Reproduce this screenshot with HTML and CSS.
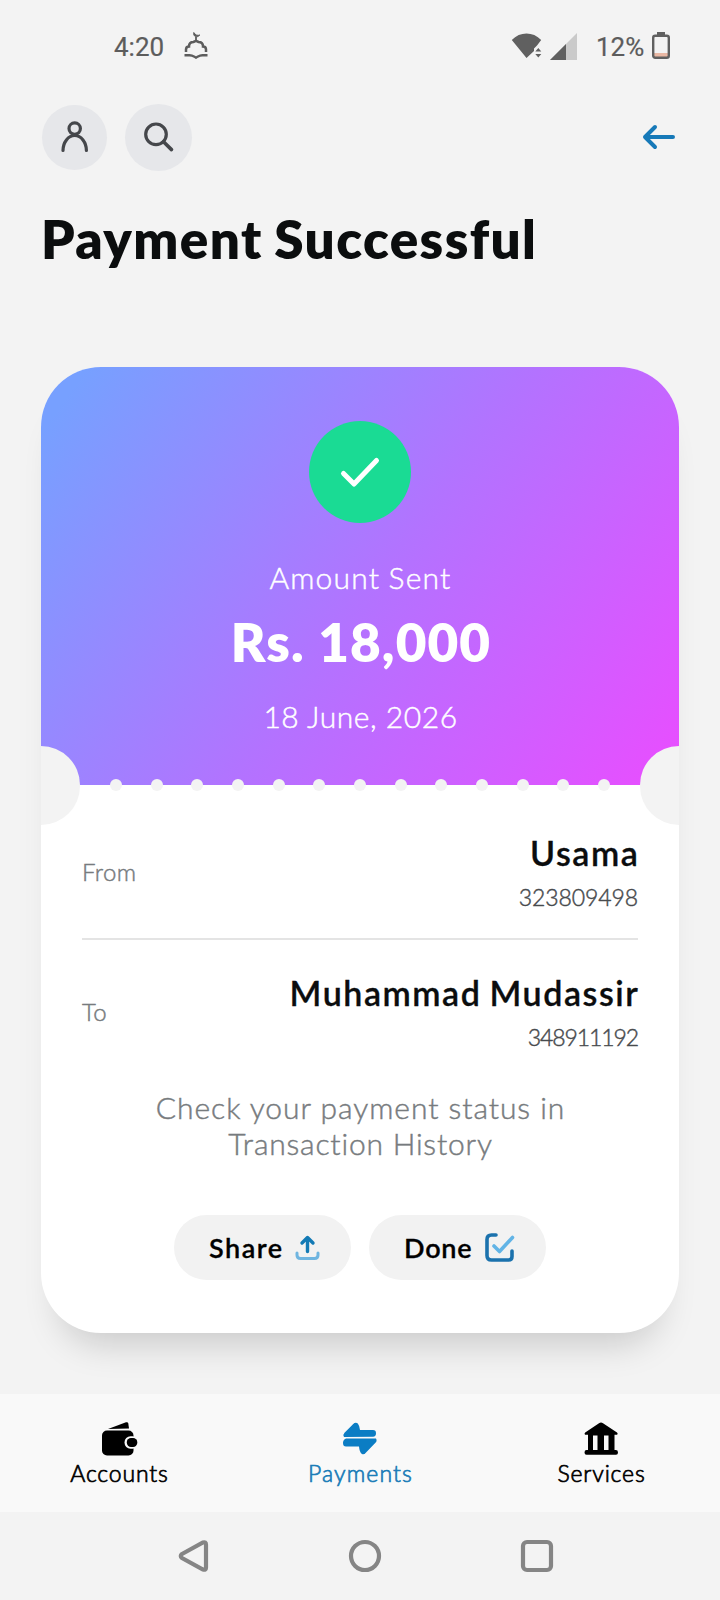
FILE: index.html
```html
<!DOCTYPE html>
<html lang="en">
<head>
<meta charset="utf-8">
<title>Payment Successful</title>
<link rel="stylesheet" href="styles.css">
</head>
<body>
<div class="screen">
  <header class="status">
    <span class="clock">4:20</span>
    <svg class="mosque" width="24" height="28" viewBox="0 0 24 28" fill="none" stroke="#5c5c5c" stroke-width="2.500"><path d="M2 20v-2.500c0-2 1-3 3-3 0-3 2-4.500 4.500-4.500L12 8.800l2.500 1.200c2.500 0 4.500 1.500 4.500 4.500 2 0 3 1 3 3V20M.5 23.300h5c3 0 4 1 6.500 2.200 2.500-1.200 3.500-2.200 6.500-2.200h5"/><path d="M12 5v4" stroke-width="1.800"/><path d="M9.800.5c-.8 4 3 6 6 2.500-2 .8-4.500.3-6-2.500z" fill="#5c5c5c" stroke-width="1"/></svg>
    <svg class="wifi" width="32" height="28" viewBox="0 0 32 28" fill="#606060"><path d="M.8 8C9-.6 22-.6 30.200 8L26 13.500l-3 3v2.500L15.500 26z"/><path d="M24.300 19.500h6L27.300 16zM24.300 22h6l-3 3.500z"/></svg>
    <svg class="signal" width="28" height="28" viewBox="0 0 28 28"><path d="M0 28L27 1v27z" fill="#cacaca"/><path d="M0 28l16-16v16z" fill="#606060"/></svg>
    <span class="percent">12%</span>
    <svg class="battery" width="18" height="28" viewBox="0 0 18 28"><path d="M5 0h8v4H5z" fill="#606060"/><path d="M2 21h14v4H2z" fill="#eab8a4"/><rect x="1.200" y="3.700" width="15.600" height="22" rx="2" fill="none" stroke="#606060" stroke-width="2.400"/></svg>
  </header>

  <div class="toolbar">
    <button class="round profile" aria-label="Profile"><svg width="30" height="34" viewBox="0 0 30 34" fill="none" stroke="#45474b" stroke-width="3.200" stroke-linecap="round"><circle cx="14.700" cy="8.600" r="5.700"/><path d="M3 30.500a11.700 15 0 0 1 23.400 0"/></svg></button>
    <button class="round search" aria-label="Search"><svg width="32" height="32" viewBox="0 0 32 32" fill="none" stroke="#45474b" stroke-width="3.200" stroke-linecap="round"><circle cx="13" cy="13.300" r="10.300"/><path d="M20.500 20.800l8 7.800" stroke-width="3.600"/></svg></button>
    <button class="back" aria-label="Back"><svg width="34" height="28" viewBox="0 0 34 28" fill="none" stroke="#1679b8" stroke-width="4" stroke-linecap="round" stroke-linejoin="round"><path d="M31 14H3M13 4L3 14l10 10"/></svg></button>
  </div>
  <h1 class="title">Payment Successful</h1>

  <main class="card">
    <section class="hero">
      <div class="success"><svg width="42" height="34" viewBox="0 0 42 34" fill="none" stroke="#fff" stroke-width="5" stroke-linecap="round" stroke-linejoin="round"><path d="M4.500 18.500l10.500 10.500L37.500 5.500"/></svg></div>
      <p class="label">Amount Sent</p>
      <p class="amount">Rs. 18,000</p>
      <p class="date">18 June, 2026</p>
      <div class="notch left"></div>
      <div class="notch right"></div>
      <div class="perforation"><i></i><i></i><i></i><i></i><i></i><i></i><i></i><i></i><i></i><i></i><i></i><i></i><i></i></div>
    </section>
    <section class="details">
      <div class="party from">
        <span class="role">From</span>
        <div class="who"><p class="name">Usama</p><p class="number">323809498</p></div>
      </div>
      <div class="party to">
        <span class="role">To</span>
        <div class="who"><p class="name">Muhammad Mudassir</p><p class="number second">348911192</p></div>
      </div>
      <p class="note">Check your payment status in<br><span class="line2">Transaction History</span></p>
      <div class="actions">
        <button class="pill"><span class="share">Share</span><svg width="26" height="26" viewBox="0 0 26 26" fill="none" stroke-width="3" stroke-linecap="round" stroke-linejoin="round"><path d="M12.500 16.500V2.500M7 8l5.500-5.500L18 8" stroke="#137ab5" stroke-width="3.400"/><path d="M2 18v2c0 2.500 1.500 3.500 3.500 3.500h14c2 0 3.500-1 3.500-3.500v-2" stroke="#6fb5e0"/></svg></button>
        <button class="pill"><span class="done">Done</span><svg width="30" height="30" viewBox="0 0 30 30" fill="none" stroke-width="3.600" stroke-linecap="round" stroke-linejoin="round"><path d="M11 2H6.500C3.500 2 2 3.500 2 6.500v16C2 25.500 3.500 27 6.500 27h17c2.500 0 3.500-1 3.500-3.500V18" stroke="#1b72ad"/><path d="M9 13l5.500 5.500L27.500 4.500" stroke="#62b4e6"/></svg></button>
      </div>
    </section>
  </main>

  <nav class="tabs">
    <a class="tab"><svg width="38" height="36" viewBox="0 0 38 36"><path d="M8 8L26 1.300q2-.6 2.300 1.200L29 7.500z"/><rect x="2" y="9.500" width="31.500" height="25" rx="5"/><rect x="24.500" y="15.200" width="14" height="12.500" rx="6" fill="#f9f9f9"/><rect x="26.800" y="17" width="10.500" height="9" rx="4.200"/></svg><span>Accounts</span></a>
    <a class="tab active"><svg width="38" height="36" viewBox="0 0 38 36" fill="#0b7dc4"><path d="M3 16Q1.500 13.800 3.500 11.800L12 3.200Q14.500.7 16.800 2.500 18.500 4.500 19 9H32q3 0 3 3.300T32 15.800z"/><path d="M35 17.500q1.500 2.500-.8 4.600L26 30.500q-2.500 3.500-5 2.500-2.500-1.500-3-7.500H5q-3 0-3-3.500T5 17.500z"/></svg><span>Payments</span></a>
    <a class="tab"><svg width="38" height="36" viewBox="0 0 38 36"><path d="M19 1.500q1 0 2 .7l14 9.300q1.200 1 .2 2.300H32.500V29h1.300q2.200 0 2.200 2.400T34 33.800H4.500q-2 0-2-2.400T4.500 29H6V13.800H3q-1-1.300.2-2.300L17 2.200q1-.7 2-.7zM11 14.500V29h4.500V14.500zM22 14.500V29h4.500V14.500z" fill-rule="evenodd"/></svg><span>Services</span></a>
  </nav>

  <footer class="system">
    <svg width="32" height="34" viewBox="0 0 32 34"><path d="M4 15L25 3.500q3-1 3 2v23q0 3-3 2L4 19q-2.500-2 0-4z"/></svg>
    <svg width="34" height="34" viewBox="0 0 34 34"><circle cx="17" cy="17" r="14"/></svg>
    <svg width="34" height="34" viewBox="0 0 34 34"><rect x="3" y="3" width="28" height="28" rx="4"/></svg>
  </footer>
</div>
</body>
</html>
```
FILE: styles.css
```css
* { box-sizing: border-box; }
body, h1, p { margin: 0; }
button { border: 0; padding: 0; background: none; font: inherit; color: inherit; }
svg { display: block; flex: none; }
body { background: #f3f3f3; font-family: Lato, "Noto Sans", sans-serif; color: #0b0d0e; }
.screen { width: 720px; height: 1600px; display: flex; flex-direction: column; overflow: hidden; }
.status { height: 103px; padding: 32px 50px 0 114px; display: flex; align-items: flex-start; font: 26px/30px Roboto, sans-serif; color: #5c5c5c; -webkit-text-stroke: .2px; }
.clock { width: 70px; }
.wifi { margin-left: auto; }
.signal { margin: 0 18px 0 7px; }
.percent { width: 56px; white-space: nowrap; }
.toolbar { height: 68px; padding: 0 44px 0 42px; display: flex; align-items: center; }
.round { border-radius: 50%; background: #e6e7ea; display: grid; place-items: center; }
.profile { width: 65px; height: 65px; }
.search { width: 67px; height: 67px; margin-left: 18px; }
.back { margin-left: auto; }
.title { margin: 36px 0 0 41px; font-size: 53px; line-height: 64px; font-weight: 800; letter-spacing: 1.400px; word-spacing: -2px; white-space: nowrap; }
.card { margin: 96px 41px 0; height: 966px; border-radius: 60px; background: #fff; box-shadow: 0 30px 36px -20px rgba(0, 0, 0, .18); }
.hero { position: relative; height: 418px; padding-top: 54px; border-radius: 60px 60px 0 0; background: linear-gradient(126deg, #77a0ff 5%, #b273ff 52%, #ec4bff 102%); color: #fff; text-align: center; }
.success { width: 102px; height: 102px; margin: 0 auto; border-radius: 50%; background: #1adb94; display: grid; place-items: center; }
.label, .date, .role, .number, .note { font-weight: 300; -webkit-text-stroke: .45px; }
.label, .date { font-size: 30px; line-height: 40px; }
.label { margin-top: 34px; padding-left: 1px; letter-spacing: 1.200px; word-spacing: -1px; }
.amount { margin-top: 13px; padding-left: 2px; font-size: 53px; line-height: 64px; font-weight: 800; letter-spacing: 1.100px; }
.date { margin-top: 22px; padding-left: 1px; letter-spacing: .550px; }
.notch { position: absolute; bottom: -40px; width: 39px; height: 79px; background: #f3f3f3; }
.notch.left { left: 0; border-radius: 0 40px 40px 0; }
.notch.right { right: 0; border-radius: 40px 0 0 40px; }
.perforation { position: absolute; left: 69px; right: 69px; bottom: -6px; display: flex; justify-content: space-between; }
.perforation i { width: 12px; height: 12px; border-radius: 50%; background: #f3f3f3; }
.details { padding: 0 41px; }
.party { display: flex; align-items: center; justify-content: space-between; }
.from { padding: 48px 0 26px; border-bottom: 2px solid #e4e4e4; }
.to { padding-top: 33px; }
.role { margin-top: -1px; font-size: 24px; line-height: 30px; color: #777b7e; letter-spacing: .4px; }
.who { text-align: right; }
.name { margin-right: -1.400px; font-size: 34px; line-height: 40px; font-weight: 600; letter-spacing: 1.550px; word-spacing: -2px; -webkit-text-stroke: .3px; }
.number { margin-top: 9px; font-size: 23px; line-height: 30px; color: #484b4e; letter-spacing: -.1px; }
.second { letter-spacing: -1.100px; }
.note { margin-top: 37px; padding-left: 1px; font-size: 30px; line-height: 36px; color: #777b7e; text-align: center; letter-spacing: .95px; }
.line2 { letter-spacing: .8px; }
.actions { margin-top: 54px; display: flex; justify-content: center; gap: 18px; }
.pill { width: 177px; height: 65px; padding-left: 35px; border-radius: 33px; background: #f2f2f2; display: flex; align-items: center; font-size: 27px; font-weight: 600; color: #000; -webkit-text-stroke: .3px; }
.pill span { text-align: left; }
.share { width: 86px; letter-spacing: 1.500px; }
.done { width: 81px; letter-spacing: .8px; }
.tabs { margin-top: 61px; height: 118px; padding-top: 27px; background: #f9f9f9; display: grid; grid-template-columns: 238px 244px 238px; }
.tab { display: flex; flex-direction: column; align-items: center; font-size: 23px; line-height: 30px; color: #000; }
.tab span { margin-top: 1px; padding-left: 1px; font-weight: 300; letter-spacing: .85px; -webkit-text-stroke: .7px; }
.active { color: #1b7db8; }
.tab.active span { letter-spacing: 1.100px; }
.system { height: 88px; padding: 0 166px 0 178px; display: flex; align-items: center; justify-content: space-between; fill: none; stroke: #858585; stroke-width: 4.200; }
```
